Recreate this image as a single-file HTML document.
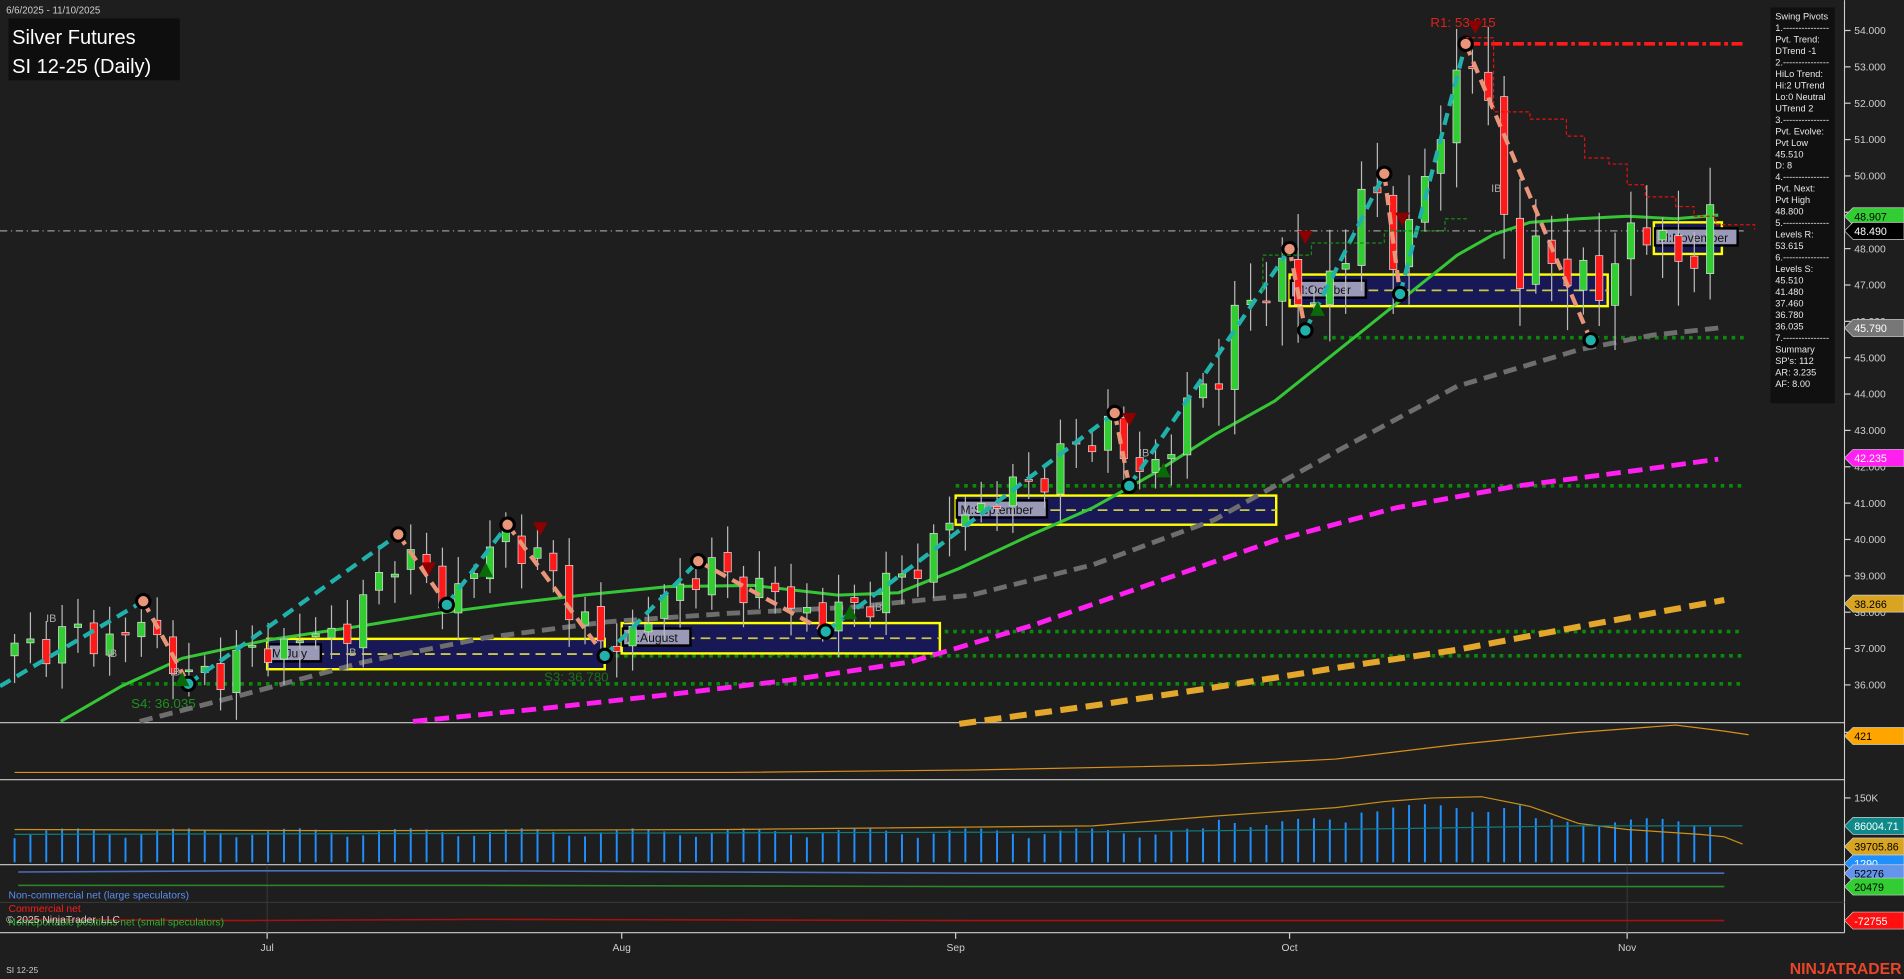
<!DOCTYPE html>
<html><head><meta charset="utf-8">
<style>
html,body{margin:0;padding:0;background:#1e1e1e;overflow:hidden}
svg{display:block}
text{font-family:"Liberation Sans",Arial,sans-serif}
</style></head>
<body>
<svg id="c" width="1904" height="979" viewBox="0 0 1568 806" xmlns="http://www.w3.org/2000/svg">
<rect width="1568" height="806" fill="#1e1e1e"/>
<g id="grid"></g>
<g stroke="#cfcfcf" stroke-width="0.9">
<line x1="0" y1="595" x2="1519" y2="595"/>
<line x1="0" y1="642" x2="1519" y2="642"/>
<line x1="0" y1="712" x2="1519" y2="712"/>
<line x1="0" y1="768" x2="1519" y2="768"/>
<line x1="1519" y1="0" x2="1519" y2="768"/>
</g>
<line x1="0" y1="743" x2="1519" y2="743" stroke="#3a3a3a" stroke-width="0.8"/>
<line x1="1340" y1="712" x2="1340" y2="768" stroke="#3a3a3a" stroke-width="0.8"/>
<line x1="220" y1="712" x2="220" y2="768" stroke="#3a3a3a" stroke-width="0.8"/>
<g stroke="#0a8a0a" stroke-width="3" stroke-dasharray="3,4">
<line x1="1090" y1="278" x2="1436" y2="278"/>
<line x1="787" y1="400" x2="1436" y2="400"/>
<line x1="512" y1="520" x2="1436" y2="520"/>
<line x1="220" y1="540" x2="1436" y2="540"/>
<line x1="100" y1="563" x2="1436" y2="563"/>
</g>
<line x1="0" y1="190" x2="1436" y2="190" stroke="#9a9a9a" stroke-width="1" stroke-dasharray="6,3,1,3"/>
<line x1="1210" y1="36" x2="1436" y2="36" stroke="#ff1a1a" stroke-width="3" stroke-dasharray="9,3,3,3"/>
<text x="1178" y="22" fill="#e0201a" font-size="11">R1: 53.615</text>
<text x="108" y="583" fill="#1e8f1e" font-size="11">S4: 36.035</text>
<text x="448" y="561" fill="#1e6f1e" font-size="11">S3: 36.780</text>
<text x="632" y="540" fill="#1e6f1e" font-size="11">S2: 37.460</text>
<text x="868" y="420" fill="#1e6f1e" font-size="11">S1: 41.480</text>
<g id="boxes"></g>
<polyline fill="none" stroke="#e3a82b" stroke-width="5" stroke-dasharray="14,7" points="790,596 900,581 1000,566 1100,550 1200,535 1300,516 1420,494"/>
<polyline fill="none" stroke="#ff1ff0" stroke-width="4" stroke-dasharray="12,6" points="340,594 450,583 550,572 650,560 750,545 850,515 950,480 1050,445 1150,418 1250,400 1350,387 1415,378"/>
<polyline fill="none" stroke="#6e6e6e" stroke-width="4" stroke-dasharray="11,6" points="115,594 200,572 300,545 400,525 500,512 600,505 700,500 800,490 900,465 1000,428 1100,372 1200,318 1260,300 1300,288 1360,276 1415,270"/>
<polyline fill="none" stroke="#35c635" stroke-width="2.5" points="50,594 100,565 150,542 220,527 300,515 360,505 420,497 480,490 550,483 620,482 690,490 740,488 790,468 850,440 900,418 950,390 1000,358 1050,330 1100,290 1150,250 1200,210 1230,193 1260,183 1300,180 1340,178 1380,180 1415,177"/>
<g id="candles"></g>
<g id="swings"></g>
<text x="5" y="11" fill="#cfcfcf" font-size="8">6/6/2025 - 11/10/2025</text>
<rect x="7" y="15" width="141" height="51" fill="#0e0e0e"/>
<text x="10" y="36" fill="#ffffff" font-size="16.5">Silver Futures</text>
<text x="10" y="60" fill="#ffffff" font-size="16.5">SI 12-25 (Daily)</text>
<rect x="1458" y="6" width="53" height="326" fill="#101010"/>
<g id="info" fill="#e8e8e8" font-size="7.6"></g>
<g id="axis" fill="#cfcfcf" font-size="8.5"></g>
<g id="tags" font-size="8.8"></g>
<polyline fill="none" stroke="#d98f1a" stroke-width="1" points="12,636 200,636 400,636 600,636 800,634 1000,630 1100,625 1200,613 1300,603 1380,597 1420,602 1440,605"/>
<g id="vol"></g>
<polyline fill="none" stroke="#4a6fb8" stroke-width="1.3" points="15,718 200,717 400,717 600,718 800,719 1000,719 1200,719 1420,719"/>
<polyline fill="none" stroke="#2a8a2a" stroke-width="1.3" points="15,729 400,729 800,730 1420,730"/>
<polyline fill="none" stroke="#a51010" stroke-width="1.3" points="15,757 200,758 400,757 800,758 1200,758 1420,758"/>
<text x="7" y="740" fill="#5a8ef0" font-size="8.5">Non-commercial net (large speculators)</text>
<text x="7" y="751" fill="#ff1a1a" font-size="8.5">Commercial net</text>
<text x="7" y="762" fill="#2db52d" font-size="8.5">Nonreportable positions net (small speculators)</text>
<text x="5" y="760" fill="#cfcfcf" font-size="8.5">© 2025 NinjaTrader, LLC</text>
<g fill="#cfcfcf" font-size="8.5" text-anchor="middle">
<text x="220" y="783">Jul</text><text x="512" y="783">Aug</text><text x="787" y="783">Sep</text><text x="1062" y="783">Oct</text><text x="1340" y="783">Nov</text>
</g>
<g stroke="#cfcfcf"><line x1="220" y1="768" x2="220" y2="773"/><line x1="512" y1="768" x2="512" y2="773"/><line x1="787" y1="768" x2="787" y2="773"/><line x1="1062" y1="768" x2="1062" y2="773"/><line x1="1340" y1="768" x2="1340" y2="773"/></g>
<text x="5" y="801" fill="#cfcfcf" font-size="7">SI 12-25</text>
<text x="1566" y="802" fill="#e8452a" font-size="13" font-weight="bold" text-anchor="end">NINJATRADER</text>
</svg>
<script>
const NS="http://www.w3.org/2000/svg";
function el(p,t,a,txt){const e=document.createElementNS(NS,t);for(const k in a)e.setAttribute(k,a[k]);if(txt!==undefined)e.textContent=txt;document.getElementById(p).appendChild(e);return e;}
const Y=p=>25+(54-p)*29.94;
[[220,498,526,551,"M:July"],[512,774,513,538,"M:August"],[787,1051,408,432,"M:September"],[1062,1324,226,252,"M:October"],[1362,1418,183,209,"M:November"]].forEach(b=>{
 el("boxes","rect",{x:b[0],y:b[2],width:b[1]-b[0],height:b[3]-b[2],fill:"#171855",stroke:"#ffff00","stroke-width":2});
 const m=(b[2]+b[3])/2;
 el("boxes","line",{x1:b[0],y1:m,x2:b[1],y2:m,stroke:"#c8c84a","stroke-width":1.5,"stroke-dasharray":"8,5"});
 const w=b[4].length*6.2+6;
 el("boxes","rect",{x:b[0]+1,y:m-8,width:w,height:14,fill:"#9a9ab8",stroke:"#000","stroke-width":2});
 el("boxes","text",{x:b[0]+4,y:m+3,fill:"#111","font-size":10,"font-family":"Liberation Mono,monospace"},b[4]);
});
const kp=[[12,36.9],[60,37.4],[100,37.2],[118,37.8],[155,36.1],[220,37.0],[290,37.6],[328,39.8],[368,38.3],[418,40.2],[460,38.8],[498,36.9],[540,38.0],[575,39.2],[630,38.6],[680,37.8],[740,38.8],[787,40.6],[850,41.6],[918,43.3],[930,41.6],[960,42.4],[1000,44.8],[1040,47.0],[1062,47.6],[1075,45.7],[1100,47.8],[1140,49.8],[1153,47.1],[1180,50.8],[1207,53.4],[1220,52.8],[1232,50.5],[1245,47.6],[1270,47.5],[1300,47.9],[1310,45.7],[1325,47.5],[1340,48.6],[1355,48.4],[1380,47.7],[1400,48.3],[1420,48.4]];
function interp(x){for(let i=1;i<kp.length;i++){if(x<=kp[i][0]){const a=kp[i-1],b=kp[i];return a[1]+(b[1]-a[1])*(x-a[0])/(b[0]-a[0]);}}return kp[kp.length-1][1];}
let prev=36.8;
for(let i=0;i<=107;i++){
 const x=12+i*13.05;
 const n=Math.sin(i*2.3)*0.35+Math.cos(i*1.7)*0.25;
 const c=interp(x)+n*(x>1000?1.6:1);
 const o=prev+Math.sin(i*3.1)*0.15;
 const hi=Math.max(o,c)+0.25+Math.abs(Math.sin(i*1.3))*0.5*(x>1000?2:1);
 const lo=Math.min(o,c)-0.25-Math.abs(Math.cos(i*0.9))*0.5*(x>1000?2:1);
 el("candles","line",{x1:x,y1:Y(hi),x2:x,y2:Y(lo),stroke:"#bbbbbb","stroke-width":1});
 const up=c>=o;const t=Y(Math.max(o,c)),bt=Y(Math.min(o,c));
 el("candles","rect",{x:x-3,y:t,width:6,height:Math.max(1.5,bt-t),fill:up?"#32cd32":"#ff1a1a",stroke:"#dddddd","stroke-width":0.6});
 prev=c;
 let v=x>1120&&x<1260?120:x>1000?85:60; v+=Math.abs(Math.sin(i*2.7))*25;
 el("vol","line",{x1:x,y1:710,x2:x,y2:710-v*0.33,stroke:"#1e90ff","stroke-width":1.6});
}
el("vol","polyline",{fill:"none",stroke:"#c8901a","stroke-width":1,points:"12,683 300,684 600,683 900,680 1000,672 1100,665 1140,660 1180,657 1220,656 1260,664 1300,678 1340,683 1400,687 1420,689 1435,695"});
el("vol","polyline",{fill:"none",stroke:"#137a7a","stroke-width":1,points:"12,687 500,686 900,685 1100,683 1300,680 1435,680"});
const piv=[[118,495],[155,563],[328,440],[368,498],[418,432],[498,540],[575,462],[680,520],[918,340],[930,400],[1062,205],[1075,272],[1140,143],[1153,242],[1207,36],[1310,280]];
for(let i=1;i<piv.length;i++){const a=piv[i-1],b=piv[i];const upl=b[1]<a[1];
 el("swings","line",{x1:a[0],y1:a[1],x2:b[0],y2:b[1],stroke:upl?"#20b2aa":"#e8957a","stroke-width":3.5,"stroke-dasharray":"10,6"});}
el("swings","line",{x1:0,y1:565,x2:118,y2:495,stroke:"#20b2aa","stroke-width":3.5,"stroke-dasharray":"10,6"});
piv.forEach((p,i)=>{const top=[0,2,4,6,8,10,12,14].includes(i);
 el("swings","circle",{cx:p[0],cy:p[1],r:5.5,fill:top?"#e8957a":"#20b2aa",stroke:"#000","stroke-width":2.5});});
let pts="1207,31 1230,31 1230,92 1260,92 1260,98 1290,98 1290,112 1305,112 1305,130 1325,130 1325,135 1340,135 1340,152 1355,152 1355,162 1380,162 1380,170 1395,170 1395,178 1413,178 1413,185 1445,185 1445,189";
el("swings","polyline",{fill:"none",stroke:"#e01010","stroke-width":1,"stroke-dasharray":"3,2",points:pts});
el("swings","polyline",{fill:"none",stroke:"#1a8a1a","stroke-width":1,"stroke-dasharray":"3,2",points:"1040,240 1040,210 1080,210 1080,200 1140,200 1140,190 1190,190 1190,180 1210,180"});
[[1215,22,"#8b0000"],[1075,195,"#8b0000"],[1155,180,"#8b0000"],[930,345,"#8b0000"],[445,435,"#8b0000"],[353,468,"#8b0000"]].forEach(t=>{
 el("swings","polygon",{points:`${t[0]-6},${t[1]-5} ${t[0]+6},${t[1]-5} ${t[0]},${t[1]+6}`,fill:t[2]});});
[[958,388],[1085,255],[150,560],[400,470],[700,505]].forEach(t=>el("swings","polygon",{points:`${t[0]-6},${t[1]+5} ${t[0]+6},${t[1]+5} ${t[0]},${t[1]-7}`,fill:"#0a6a0a"}));
[[38,512,"IB"],[88,541,"IB"],[140,556,"IB"],[1228,158,"IB"],[718,503,"IB"],[285,540,"IB"],[938,376,"IB"]].forEach(t=>el("swings","text",{x:t[0],y:t[1],fill:"#aaaaaa","font-size":9},t[2]));
const info=["Swing Pivots","1.---------------","Pvt. Trend:","DTrend -1","2.---------------","HiLo Trend:","Hi:2 UTrend","Lo:0 Neutral","UTrend 2","3.---------------","Pvt. Evolve:","Pvt Low","45.510","D: 8","4.---------------","Pvt. Next:","Pvt High","48.800","5.---------------","Levels R:","53.615","6.---------------","Levels S:","45.510","41.480","37.460","36.780","36.035","7.---------------","Summary","SP's: 112","AR: 3.235","AF: 8.00"];
info.forEach((s,i)=>el("info","text",{x:1462,y:16+i*9.45},s));
for(let p=36;p<=54;p++){const y=Y(p);el("axis","line",{x1:1519,y1:y,x2:1524,y2:y,stroke:"#cfcfcf"});el("axis","text",{x:1527,y:y+3},p.toFixed(3));}
[[606,"200"],[660,"150K"]].forEach(a=>{el("axis","line",{x1:1519,y1:a[0]-3,x2:1524,y2:a[0]-3,stroke:"#cfcfcf"});el("axis","text",{x:1527,y:a[0]},a[1]);});
[[178,"48.907","#32cd32","#000"],[190,"48.490","#000","#fff"],[270,"45.790","#777","#fff"],[377,"42.235","#ff1ff0","#fff"],[497,"38.266","#d9a520","#000"],[606,"421","#ffa500","#000"],[680,"86004.71","#0e8a8a","#fff"],[697,"39705.86","#d9a520","#000"],[711,"1290","#1e90ff","#fff"],[719,"52276","#6495ed","#000"],[730,"20479","#32cd32","#000"],[758,"-72755","#ff1010","#fff"]].forEach(t=>{
 const y=t[0];el("tags","polygon",{points:`1519,${y} 1526,${y-7} 1568,${y-7} 1568,${y+7} 1526,${y+7}`,fill:t[2],stroke:"#ccc","stroke-width":0.6});
 el("tags","text",{x:1527,y:y+3.5,fill:t[3]},t[1]);});
</script>
</body></html>
